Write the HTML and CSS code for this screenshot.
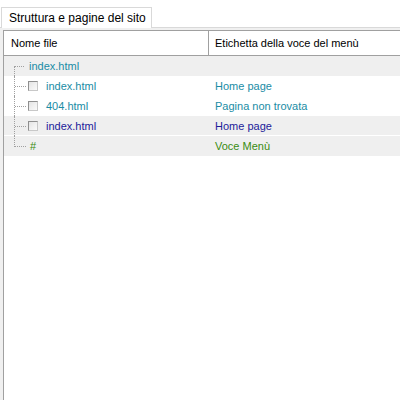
FILE: index.html
```html
<!DOCTYPE html>
<html lang="it">
<head>
<meta charset="utf-8">
<title>Struttura e pagine del sito</title>
<link rel="stylesheet" href="styles.css">
</head>
<body>
<div class="tabs">
  <div class="tab">Struttura e pagine del sito</div>
</div>
<div class="panel">
  <div class="list">
    <div class="head">
      <div class="hcell c1">Nome file</div>
      <div class="hcell c2">Etichetta della voce del menù</div>
    </div>
    <div class="row alt">
      <div class="cell c1 root teal">index.html</div>
      <div class="cell c2"></div>
    </div>
    <div class="row">
      <div class="cell c1 child teal"><span class="chk"></span>index.html</div>
      <div class="cell c2 teal">Home page</div>
    </div>
    <div class="row">
      <div class="cell c1 child teal"><span class="chk"></span>404.html</div>
      <div class="cell c2 teal">Pagina non trovata</div>
    </div>
    <div class="row alt sep">
      <div class="cell c1 child navy"><span class="chk"></span>index.html</div>
      <div class="cell c2 navy">Home page</div>
    </div>
    <div class="row alt">
      <div class="cell c1 child last green"><span class="hash">#</span></div>
      <div class="cell c2 green">Voce Menù</div>
    </div>
  </div>
</div>
</body>
</html>
```

FILE: styles.css
```css
html, body {
  margin: 0;
  height: 100%;
}
body {
  font-family: "Liberation Sans", Arial, sans-serif;
  font-size: 11px;
  background: #ffffff;
  color: #000;
  display: flex;
  flex-direction: column;
  overflow: hidden;
}
.tabs {
  display: flex;
  padding: 7px 0 0 1px;
  height: 20px;
  box-sizing: content-box;
}
.tab {
  box-sizing: border-box;
  width: 151px;
  height: 21px;
  padding: 2px 0 0 7px;
  border: 1px solid #d9d9d9;
  border-bottom: none;
  background: #fff;
  font-size: 12px;
  line-height: 16px;
  white-space: nowrap;
  position: relative;
  z-index: 1;
}
.panel {
  flex: 1;
  border-top: 1px solid #d9d9d9;
  background: #f0f0f0;
  padding: 2px 0 0 3px;
  display: flex;
}
.list {
  flex: 1;
  background: #fff;
  border-left: 1px solid #a0a0a0;
  border-top: 1px solid #a0a0a0;
  display: flex;
  flex-direction: column;
}
.head {
  display: grid;
  grid-template-columns: 205px 1fr;
  height: 24px;
  border-bottom: 1px solid #a0a0a0;
  line-height: 24px;
}
.hcell.c1 {
  padding-left: 7px;
  border-right: 1px solid #a0a0a0;
}
.hcell.c2 {
  padding-left: 6px;
}
.row {
  display: grid;
  grid-template-columns: 205px 1fr;
  height: 20px;
  line-height: 20px;
}
.row.alt {
  background: #efefef;
}
.row.sep {
  box-shadow: inset 0 -1px 0 #ffffff;
}
.cell {
  position: relative;
  white-space: nowrap;
}
.cell.c2 {
  padding-left: 6px;
}
.cell.root {
  padding-left: 25px;
}
.cell.root::before {
  content: "";
  position: absolute;
  left: 10px;
  top: 10px;
  width: 10px;
  border-top: 1px dotted #a0a0a0;
}
.cell.root::after {
  content: "";
  position: absolute;
  left: 10px;
  top: 11px;
  bottom: 0;
  border-left: 1px dotted #a0a0a0;
}
.cell.child {
  padding-left: 24px;
  display: flex;
  align-items: center;
}
.cell.child::before {
  content: "";
  position: absolute;
  left: 11px;
  top: 10px;
  width: 11px;
  border-top: 1px dotted #a0a0a0;
}
.cell.child::after {
  content: "";
  position: absolute;
  left: 10px;
  top: 0;
  bottom: 0;
  border-left: 1px dotted #a0a0a0;
}
.cell.child.last::after {
  bottom: 9px;
}
.chk {
  box-sizing: border-box;
  width: 10px;
  height: 10px;
  border: 1px solid #8f8f8f;
  border-right-color: #c8c8c8;
  border-bottom-color: #c8c8c8;
  background: linear-gradient(135deg, #e4e4e4, #fafafa);
  margin-right: 8px;
}
.hash {
  padding-left: 2px;
}
.teal { color: #1a8ca5; }
.navy { color: #1c1c9a; }
.green { color: #3a8c12; }
```
